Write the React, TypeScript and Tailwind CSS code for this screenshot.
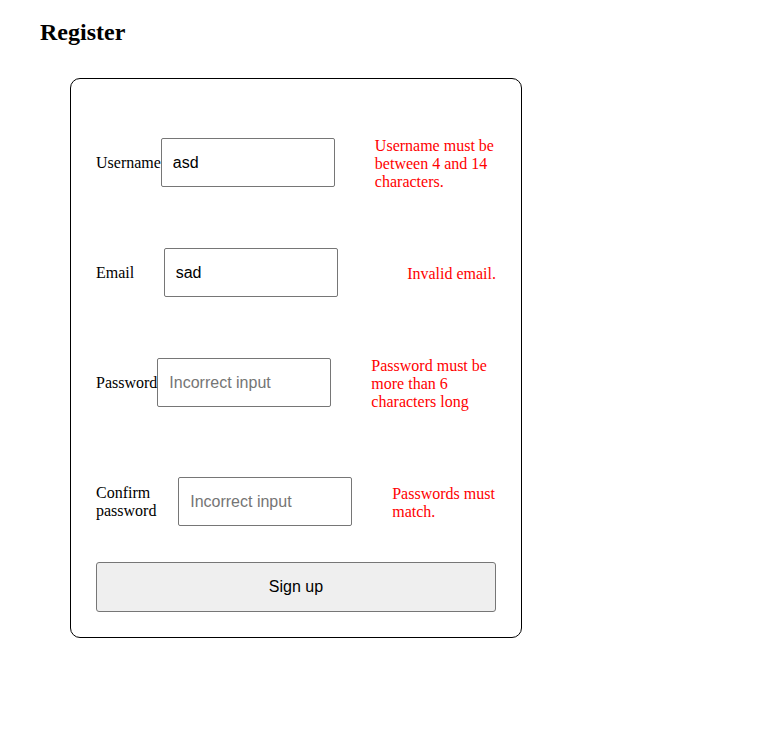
import React from "react";

type Field = {
  label: string;
  value?: string;
  error: string;
};

const fields: Field[] = [
  { label: "Username", value: "asd", error: "Username must be between 4 and 14 characters." },
  { label: "Email", value: "sad", error: "Invalid email." },
  { label: "Password", error: "Password must be more than 6 characters long" },
  { label: "Confirm password", error: "Passwords must match." },
];

const App = () => {
  return (
    <div className="min-h-[731px] bg-white px-10 font-['Liberation_Serif','Times_New_Roman',serif] text-black">
      <h2 className="mt-[18px] text-2xl font-bold leading-[28px]">Register</h2>
      <form
        className="ml-[30px] mt-[32px] w-[452px] rounded-[10px] border border-black px-[25px] pb-[25px] pt-10"
        onSubmit={(e) => e.preventDefault()}
      >
        <div className="flex flex-col gap-[42px]">
          {fields.map((f) => (
            <div key={f.label} className="flex items-center justify-between">
              <label className="translate-y-[1px] text-base leading-[18px]">{f.label}</label>
              <input
                type="text"
                defaultValue={f.value}
                placeholder={f.value ? undefined : "Incorrect input"}
                className="h-[49px] w-[174px] shrink-0 rounded-[2px] border border-[#767676] px-[11px] pt-[1px] font-['Liberation_Sans',Arial,sans-serif] text-base text-black placeholder:text-[#757575] focus:outline-none"
              />
              <p className="my-4 ml-10 translate-y-[2px] text-base leading-[18px] text-[#ff0000]">{f.error}</p>
            </div>
          ))}
        </div>
        <button
          type="submit"
          className="mt-[27px] h-[50px] w-full rounded-[3px] border border-[#767676] bg-[#efefef] font-['Liberation_Sans',Arial,sans-serif] text-base text-black"
        >
          Sign up
        </button>
      </form>
    </div>
  );
};

export default App;
